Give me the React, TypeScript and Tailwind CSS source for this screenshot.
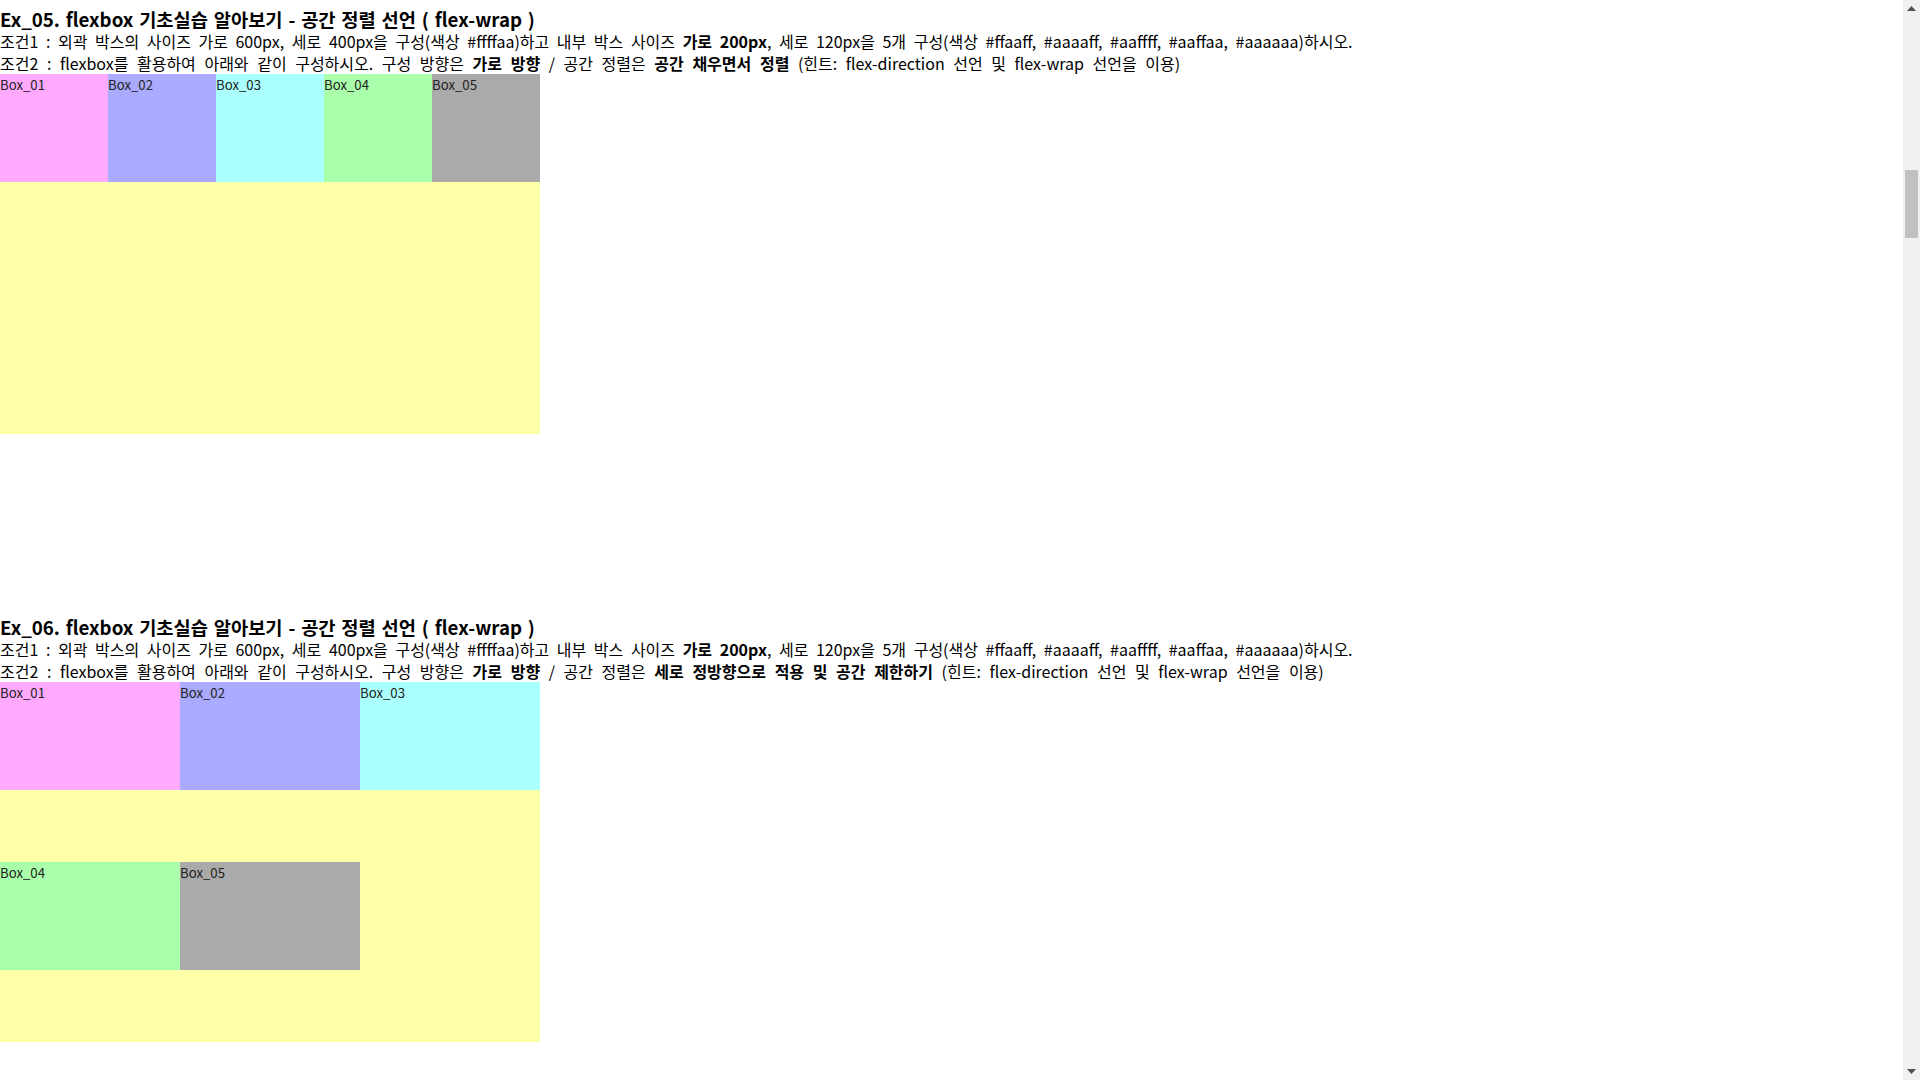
import React from "react";

const boxes = [
  { label: "Box_01", color: "bg-[#ffaaff]" },
  { label: "Box_02", color: "bg-[#aaaaff]" },
  { label: "Box_03", color: "bg-[#aaffff]" },
  { label: "Box_04", color: "bg-[#aaffaa]" },
  { label: "Box_05", color: "bg-[#aaaaaa]" },
];

function Section({
  num,
  rule,
  wrap,
}: {
  num: string;
  rule: string;
  wrap: boolean;
}) {
  return (
    <section className="pt-[8px]">
      <h3 className="text-[18.7px] font-bold leading-[22px] whitespace-nowrap [word-spacing:1.6px]">
        Ex_{num}. flexbox 기초실습 알아보기 - 공간 정렬 선언 ( flex-wrap )
      </h3>
      <p className="leading-[22px] whitespace-nowrap [word-spacing:4px]">
        조건1 : 외곽 박스의 사이즈 가로 600px, 세로 400px을 구성(색상 #ffffaa)하고 내부 박스 사이즈{" "}
        <b>가로 200px</b>, 세로 120px을 5개 구성(색상 #ffaaff, #aaaaff, #aaffff, #aaffaa, #aaaaaa)하시오.
      </p>
      <p className="leading-[22px] whitespace-nowrap [word-spacing:5px]">
        조건2 : flexbox를 활용하여 아래와 같이 구성하시오. 구성 방향은 <b>가로 방향</b> / 공간 정렬은{" "}
        <b>{rule}</b> (힌트: flex-direction 선언 및 flex-wrap 선언을 이용)
      </p>
      <div
        className={`flex h-[360px] w-[540px] bg-[#ffffaa] ${
          wrap ? "flex-wrap" : "flex-nowrap"
        }`}
      >
        {boxes.map((b) => (
          <div
            key={b.label}
            className={`h-[108px] w-[180px] shrink text-[13.2px] leading-[22px] text-[#222] ${b.color}`}
          >
            {b.label}
          </div>
        ))}
      </div>
    </section>
  );
}

function Scrollbar() {
  return (
    <div className="flex h-screen w-[17px] shrink-0 flex-col bg-[#f1f1f1]">
      <div className="flex h-[17px] items-center justify-center">
        <svg width="9" height="5" viewBox="0 0 9 5">
          <path d="M4.5 0 L9 5 L0 5 Z" fill="#505050" />
        </svg>
      </div>
      <div className="flex flex-1 flex-col px-[2px] pt-[153px]">
        <div className="h-[68px] w-[13px] bg-[#c1c1c1]" />
      </div>
      <div className="flex h-[17px] items-center justify-center">
        <svg width="9" height="5" viewBox="0 0 9 5">
          <path d="M0 0 L9 0 L4.5 5 Z" fill="#505050" />
        </svg>
      </div>
    </div>
  );
}

export default function App() {
  return (
    <div
      className="flex h-screen w-full overflow-hidden bg-white text-[16px] text-black"
      style={{ fontFamily: '"Noto Sans CJK KR", "Noto Sans", sans-serif' }}
    >
      <main className="flex-1 overflow-hidden">
        <Section num="05" rule="공간 채우면서 정렬" wrap={false} />
        <div className="h-[174px]" />
        <Section num="06" rule="세로 정방향으로 적용 및 공간 제한하기" wrap={true} />
      </main>
      <Scrollbar />
    </div>
  );
}
